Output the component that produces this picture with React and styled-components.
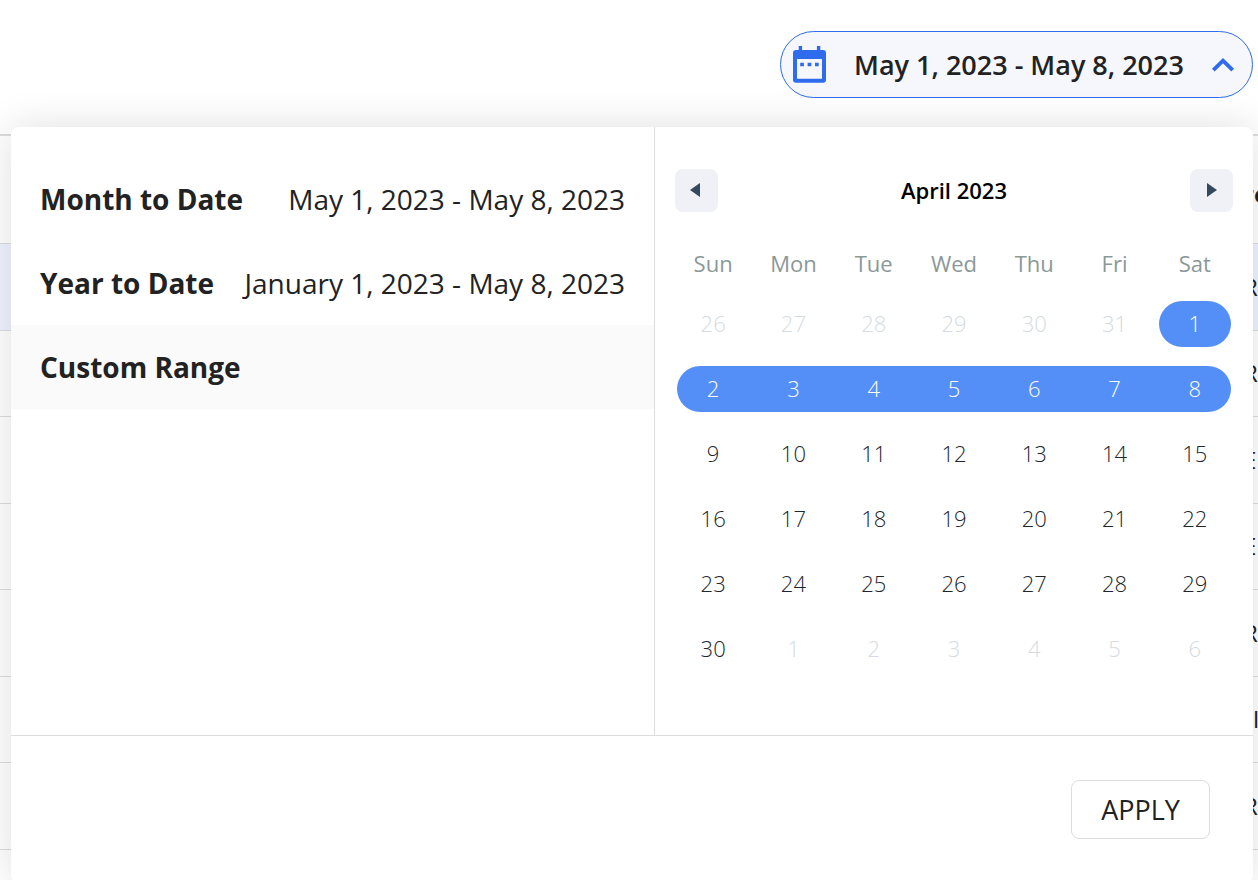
import React, { useState } from "react";
import styled, { createGlobalStyle } from "styled-components";

const GlobalStyle = createGlobalStyle`
  * {
    box-sizing: border-box;
  }

  body {
    margin: 0;
    background: #ffffff;
    color: #222222;
    font-family: "Open Sans", "Noto Sans", sans-serif;
  }

  button {
    font-family: inherit;
    cursor: pointer;
  }
`;

// Whole page
const Page = styled.main`
  position: relative;
  min-height: 100vh;
  overflow: hidden;
`;

// Top bar that holds the date picker button
const TopBar = styled.header`
  display: flex;
  justify-content: flex-end;
  padding: 31px 5px 36px 11px;
`;

const PickerButton = styled.button`
  display: flex;
  align-items: center;
  justify-content: space-between;
  width: 473px;
  height: 67px;
  padding: 0 18px 0 12px;
  border: 1px solid #2f6bed;
  border-radius: 34px;
  background: #f6f7fd;
  color: #222222;
  font-size: 27px;
  font-weight: 600;
  line-height: 36px;
`;

// Report table behind the popover
const ReportTable = styled.table`
  width: 100%;
  table-layout: fixed;
  border-collapse: separate;
  border-spacing: 0;
  border-top: 2px solid #dddddd;
`;

const ReportHead = styled.th`
  width: ${({ $last }) => ($last ? "15px" : "auto")};
  height: 108px;
  padding: 8px 0 0;
  border-bottom: 1px solid #dddddd;
  font-size: 24px;
  font-weight: 700;
  text-align: left;
`;

const ReportCell = styled.td`
  height: ${({ $tall }) => ($tall ? "87px" : "86px")};
  padding: 0 0 2px;
  border-bottom: 1px solid #dddddd;
  background: ${({ $active }) => ($active ? "#eff2ff" : "transparent")};
  font-size: 24px;
  text-align: left;
`;

// Popover
const Popover = styled.section`
  position: absolute;
  top: 127px;
  left: 11px;
  right: 5px;
  border-radius: 8px;
  background: #ffffff;
  box-shadow: 0 0 40px rgba(0, 0, 0, 0.13);
`;

const PopoverBody = styled.div`
  display: grid;
  grid-template-columns: 14fr 13fr;
  border-bottom: 1px solid #dddddd;
`;

const PresetList = styled.div`
  padding-top: 30px;
  border-right: 1px solid #dddddd;
`;

const Preset = styled.button`
  display: flex;
  align-items: center;
  justify-content: space-between;
  width: 100%;
  height: 84px;
  padding: 0 29px;
  border: none;
  background: ${({ $active }) => ($active ? "#fafafa" : "transparent")};
  color: #222222;
  font-size: 28px;
  line-height: 36px;
`;

const PresetName = styled.span`
  font-weight: 700;
`;

const PresetRange = styled.span`
  font-weight: 400;
`;

// Calendar
const Calendar = styled.div`
  padding: 42px 18px 54px;
`;

const CalendarNav = styled.div`
  display: flex;
  align-items: center;
  justify-content: space-between;
  padding: 0 2px;
  margin-bottom: 23px;
`;

const NavButton = styled.button`
  display: flex;
  align-items: center;
  justify-content: center;
  width: 43px;
  height: 43px;
  padding: 0 0 2px;
  border: none;
  border-radius: 8px;
  background: #f0f1f6;
`;

const MonthTitle = styled.h2`
  margin: 0;
  padding-bottom: 2px;
  color: #000000;
  font-size: 22px;
  font-weight: 600;
  line-height: 30px;
`;

const DayTable = styled.table`
  width: 100%;
  table-layout: fixed;
  border-collapse: collapse;
`;

const WeekDay = styled.th`
  height: 56px;
  padding: 0;
  color: #8b9898;
  font-size: 22px;
  font-weight: 400;
`;

const DayCell = styled.td`
  height: 65px;
  padding: 0;
`;

const dayColor = ({ $muted, $selected }) => {
  if ($selected) return "#ffffff";
  return $muted ? "#d5dbe0" : "#21262c";
};

const DayButton = styled.button`
  display: block;
  width: ${({ $start, $end }) =>
    $start && $end
      ? "calc(100% - 8px)"
      : $start || $end
      ? "calc(100% - 4px)"
      : "100%"};
  height: 46px;
  margin-left: ${({ $start }) => ($start ? "4px" : "0")};
  padding: 0 0 2px;
  padding-right: ${({ $start, $end }) => ($start && !$end ? "4px" : "0")};
  padding-left: ${({ $start, $end }) => ($end && !$start ? "4px" : "0")};
  border: none;
  border-radius: ${({ $start, $end }) =>
    `${$start ? "23px" : "0"} ${$end ? "23px 23px" : "0 0"} ${
      $start ? "23px" : "0"
    }`};
  background: ${({ $selected }) => ($selected ? "#548ff7" : "transparent")};
  color: ${dayColor};
  font-size: 22px;
  font-weight: 300;
  line-height: 30px;
`;

const PopoverFooter = styled.div`
  display: flex;
  justify-content: flex-end;
  padding: 44px 43px;
`;

const ApplyButton = styled.button`
  width: 139px;
  height: 59px;
  padding: 0;
  border: 1px solid #dddddd;
  border-radius: 8px;
  background: #ffffff;
  color: #222222;
  font-size: 27px;
  font-weight: 400;
  line-height: 36px;
`;

const CalendarIcon = () => (
  <svg width="33" height="37" viewBox="0 0 33 37" aria-hidden="true">
    <path
      fill="#2f6bed"
      fillRule="evenodd"
      d="M5.7 0h3.4v4h14.8V0h3.4v4H30a3 3 0 0 1 3 3v26.700a3 3 0 0 1-3 3H3a3 3 0 0 1-3-3V7a3 3 0 0 1 3-3h2.700zM4 13v19.700h25V13z"
    />
    <path
      fill="#2f6bed"
      d="M7.200 16.700h3.700v3.600H7.200zM14.600 16.700h3.700v3.600h-3.700zM22 16.700h3.700v3.600H22z"
    />
  </svg>
);

const ChevronUp = () => (
  <svg width="22" height="14" viewBox="0 0 22 14" aria-hidden="true">
    <path
      d="M1.300 12.200 11 2.700l9.700 9.500"
      fill="none"
      stroke="#2f6bed"
      strokeWidth="3.800"
    />
  </svg>
);

const ArrowLeft = () => (
  <svg width="13" height="14" viewBox="0 0 13 14" aria-hidden="true">
    <path d="M0 7 10 0v14z" fill="#34495e" />
  </svg>
);

const ArrowRight = () => (
  <svg width="11" height="14" viewBox="0 0 11 14" aria-hidden="true">
    <path d="M11 7 1 0v14z" fill="#34495e" />
  </svg>
);

const reportRows = ["R", "R", "E", "E", "R", "rI", "R"];

const presets = [
  { name: "Month to Date", range: "May 1, 2023 - May 8, 2023" },
  { name: "Year to Date", range: "January 1, 2023 - May 8, 2023" },
  { name: "Custom Range" },
];

const weekDays = ["Sun", "Mon", "Tue", "Wed", "Thu", "Fri", "Sat"];

const weeks = [
  [26, 27, 28, 29, 30, 31, 1],
  [2, 3, 4, 5, 6, 7, 8],
  [9, 10, 11, 12, 13, 14, 15],
  [16, 17, 18, 19, 20, 21, 22],
  [23, 24, 25, 26, 27, 28, 29],
  [30, 1, 2, 3, 4, 5, 6],
];

const Day = ({ day, week, column }) => {
  const muted = (week === 0 && day > 20) || (week === 5 && day < 20);
  const selected = !muted && day <= 8;

  return (
    <DayButton
      type="button"
      $muted={muted}
      $selected={selected}
      $start={selected && (day === 1 || column === 0)}
      $end={selected && (day === 8 || column === 6)}
    >
      {day}
    </DayButton>
  );
};

const App = () => {
  const [open, setOpen] = useState(true);
  const [preset, setPreset] = useState("Custom Range");

  return (
    <>
      <GlobalStyle />
      <Page>
        <TopBar>
          <PickerButton
            type="button"
            aria-expanded={open}
            onClick={() => setOpen(!open)}
          >
            <CalendarIcon />
            <span>May 1, 2023 - May 8, 2023</span>
            <ChevronUp />
          </PickerButton>
        </TopBar>
        <ReportTable>
          <thead>
            <tr>
              <ReportHead />
              <ReportHead $last>re</ReportHead>
            </tr>
          </thead>
          <tbody>
            {reportRows.map((text, i) => (
              <tr key={i}>
                <ReportCell $active={i === 0} $tall={i % 2 === 0} />
                <ReportCell $active={i === 0} $tall={i % 2 === 0}>
                  {text}
                </ReportCell>
              </tr>
            ))}
          </tbody>
        </ReportTable>
        {open && (
          <Popover>
            <PopoverBody>
              <PresetList>
                {presets.map(({ name, range }) => (
                  <Preset
                    key={name}
                    type="button"
                    $active={preset === name}
                    onClick={() => setPreset(name)}
                  >
                    <PresetName>{name}</PresetName>
                    {range && <PresetRange>{range}</PresetRange>}
                  </Preset>
                ))}
              </PresetList>
              <Calendar>
                <CalendarNav>
                  <NavButton type="button" aria-label="Previous month">
                    <ArrowLeft />
                  </NavButton>
                  <MonthTitle>April 2023</MonthTitle>
                  <NavButton type="button" aria-label="Next month">
                    <ArrowRight />
                  </NavButton>
                </CalendarNav>
                <DayTable>
                  <thead>
                    <tr>
                      {weekDays.map((name) => (
                        <WeekDay key={name}>{name}</WeekDay>
                      ))}
                    </tr>
                  </thead>
                  <tbody>
                    {weeks.map((days, week) => (
                      <tr key={week}>
                        {days.map((day, column) => (
                          <DayCell key={column}>
                            <Day day={day} week={week} column={column} />
                          </DayCell>
                        ))}
                      </tr>
                    ))}
                  </tbody>
                </DayTable>
              </Calendar>
            </PopoverBody>
            <PopoverFooter>
              <ApplyButton type="button" onClick={() => setOpen(false)}>
                APPLY
              </ApplyButton>
            </PopoverFooter>
          </Popover>
        )}
      </Page>
    </>
  );
};

export default App;
